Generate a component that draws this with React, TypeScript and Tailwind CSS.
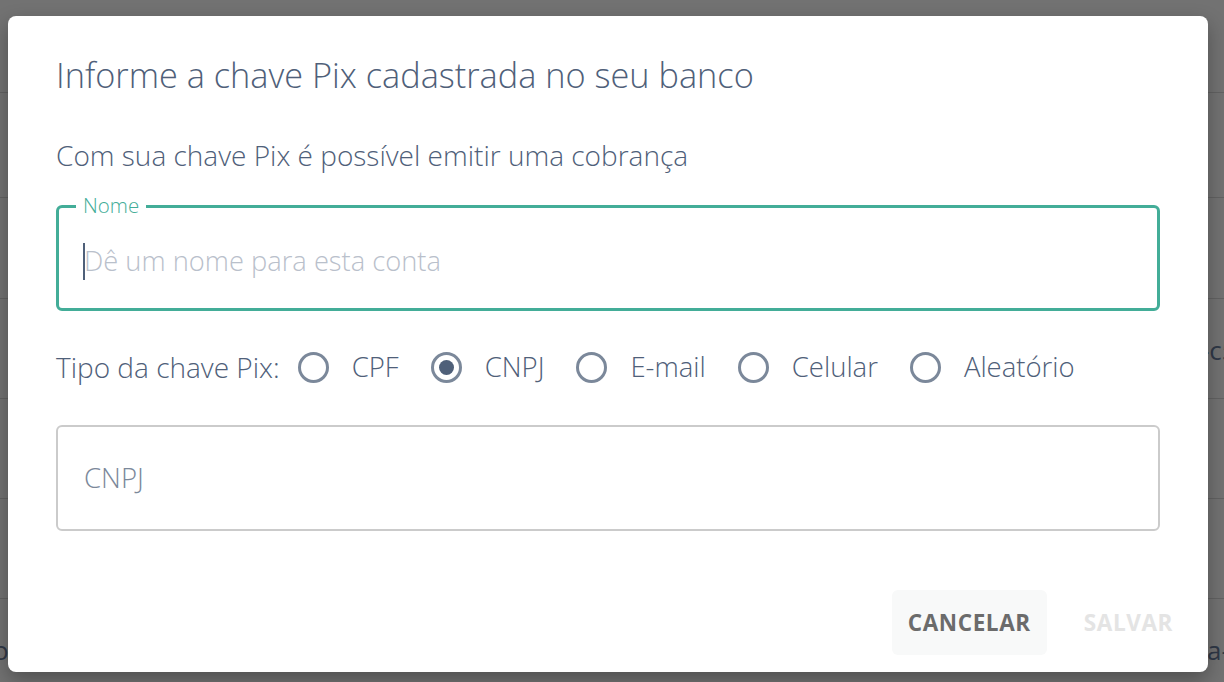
import React from "react";

const font = { fontFamily: '"Open Sans", "Noto Sans", sans-serif' };

function Radio({ label, checked }: { label: string; checked?: boolean }) {
  return (
    <label className="flex items-center mr-[32px]">
      <span className="w-[31px] h-[31px] rounded-full border-[3px] border-[#7b889a] flex items-center justify-center">
        {checked && <span className="w-[15px] h-[15px] rounded-full bg-[#4f6079]" />}
      </span>
      <span className="ml-[23px] text-[27.5px] font-light text-[#4f6079]">{label}</span>
    </label>
  );
}

export default function App() {
  const rows = [92, 197, 298, 398, 498, 598];
  return (
    <div className="relative w-[1224px] h-[682px] overflow-hidden bg-[#727272]" style={font}>
      {/* underlying page */}
      <div className="absolute inset-0">
        {rows.map((y) => (
          <div key={y} className="absolute left-0 right-0 h-px bg-[#626262]" style={{ top: y }} />
        ))}
        <div className="absolute left-[1201px] top-[332px] whitespace-nowrap text-[26px] leading-[36px] text-[#2f3847]">-c5</div>
        <div className="absolute left-[1207px] top-[632px] whitespace-nowrap text-[26px] leading-[36px] text-[#2f3847]">a-</div>
        <div className="absolute left-[-7px] top-[632px] whitespace-nowrap text-[26px] leading-[36px] text-[#2f3847]">or</div>
      </div>
      {/* modal */}
      <div className="absolute left-[8px] top-[16px] w-[1200px] h-[656px] bg-white rounded-[8px] shadow-[0_8px_20px_rgba(0,0,0,0.3)] flex flex-col px-[48px] pt-[37px]">
        <h1 className="text-[34.3px] leading-[44px] text-[#4f6079] font-light">
          Informe a chave Pix cadastrada no seu banco
        </h1>
        <p className="mt-[40px] text-[28px] leading-[36px] font-light text-[#4f6079]">
          Com sua chave Pix é possível emitir uma cobrança
        </p>
        <div className="relative mt-[32px] h-[106px] border-[3px] border-[#43ad98] rounded-[6px] flex items-center pl-[24px] pt-[6px]">
          <span className="absolute left-[17px] top-[-15px] px-[7px] bg-white text-[20.5px] leading-[24px] font-light text-[#43ad98]">
            Nome
          </span>
          <span className="w-[2px] h-[37px] bg-[#4f6079] mr-[-1px]" />
          <span className="text-[27.3px] font-light text-[#b9c0cb]">Dê um nome para esta conta</span>
        </div>
        <div className="mt-[36px] flex items-center h-[40px]">
          <span className="text-[28px] font-light text-[#4f6079] mr-[18px]">Tipo da chave Pix:</span>
          <Radio label="CPF" />
          <Radio label="CNPJ" checked />
          <Radio label="E-mail" />
          <Radio label="Celular" />
          <Radio label="Aleatório" />
        </div>
        <div className="mt-[38px] h-[106px] border-2 border-[#cbcbcb] rounded-[6px] flex items-center px-[26px]">
          <span className="text-[27.5px] font-light text-[#7b889a]">CNPJ</span>
        </div>
        <div className="mt-auto mb-[17px] flex justify-end -mr-[29px]">
          <button className="h-[65px] px-[16px] rounded-[6px] bg-[#f8f9f9] text-[22.5px] font-bold text-[#6b6b6b] tracking-[0.6px]">
            CANCELAR
          </button>
          <button className="h-[65px] px-[16px] ml-[21px] text-[22.5px] font-bold text-[#e4e4e4] tracking-[0.6px]">
            SALVAR
          </button>
        </div>
      </div>
    </div>
  );
}
